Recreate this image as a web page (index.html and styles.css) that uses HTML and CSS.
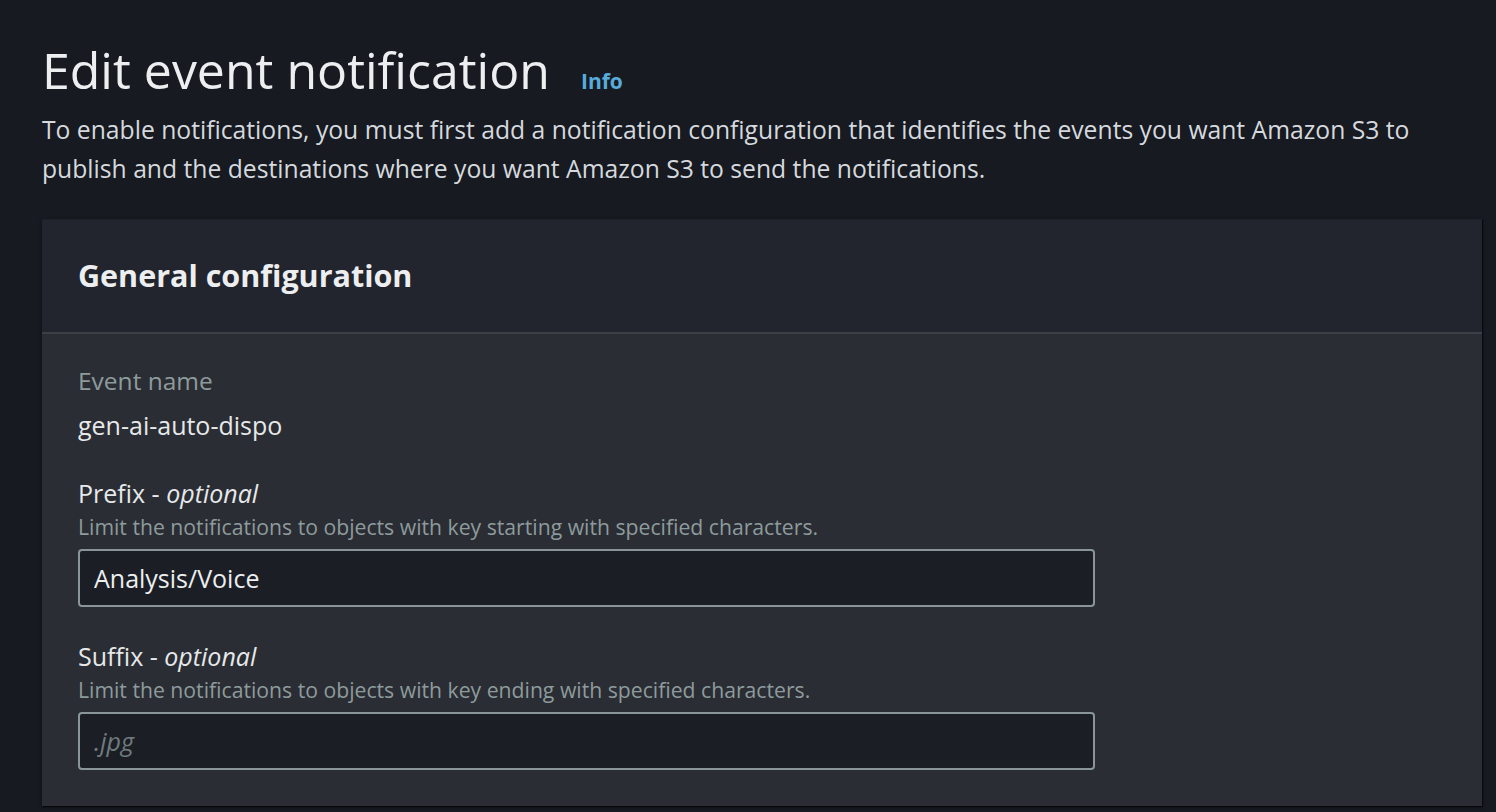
FILE: index.html
```html
<!DOCTYPE html>
<html lang="en">
<head>
<meta charset="utf-8">
<title>Edit event notification</title>
<link rel="stylesheet" href="styles.css">
</head>
<body>
<main class="page">
  <header class="page-header">
    <div class="title-row">
      <h1 class="title">Edit event notification</h1>
      <a class="info-link" href="#">Info</a>
    </div>
    <p class="description">To enable notifications, you must first add a notification configuration that identifies the events you want Amazon S3 to publish and the destinations where you want Amazon S3 to send the notifications.</p>
  </header>
  <section class="container">
    <div class="container-header">
      <h2 class="container-title">General configuration</h2>
    </div>
    <div class="container-body">
      <div class="field field-kv">
        <div class="kv-label">Event name</div>
        <div class="kv-value">gen-ai-auto-dispo</div>
      </div>
      <div class="field">
        <label class="field-label" for="prefix">Prefix - <i>optional</i></label>
        <div class="field-desc">Limit the notifications to objects with key starting with specified characters.</div>
        <input class="input" id="prefix" type="text" value="Analysis/Voice">
      </div>
      <div class="field">
        <label class="field-label" for="suffix">Suffix - <i>optional</i></label>
        <div class="field-desc">Limit the notifications to objects with key ending with specified characters.</div>
        <input class="input" id="suffix" type="text" placeholder=".jpg">
      </div>
    </div>
  </section>
</main>
</body>
</html>
```

FILE: styles.css
```css
* { box-sizing: border-box; }
html, body {
  margin: 0;
  padding: 0;
  background: #171a21;
  height: 100%;
  overflow: hidden;
}
body {
  font-family: "Open Sans", "Noto Sans", sans-serif;
  color: #e9ebed;
}
.page {
  padding: 38px 14px 0 42px;
}
.title-row {
  display: flex;
  align-items: baseline;
  gap: 31px;
}
.title {
  margin: 0;
  font-size: 50px;
  font-weight: 400;
  line-height: 64px;
  color: #eceef0;
}
.info-link {
  font-size: 21px;
  font-weight: 700;
  color: #57acdc;
  text-decoration: none;
}
.description {
  margin: 8px 0 0;
  font-size: 24.7px;
  line-height: 39px;
  color: #d5d9dd;
  max-width: 1400px;
}
.container {
  margin-top: 31px;
  background: #2a2d33;
  box-shadow: 0 1px 3px rgba(0,0,0,0.55), 1px 1px 1px rgba(0,0,0,0.5);
  border-top: 1px solid #1e2128;
}
.container-header {
  background: #22252d;
  border-bottom: 2px solid #3b3f46;
  height: 114px;
  display: flex;
  align-items: center;
  padding: 0 36px 2px;
}
.container-title {
  margin: 0;
  font-size: 30.5px;
  font-weight: 700;
  color: #eceef0;
}
.container-body {
  padding: 30px 36px 36px;
  display: flex;
  flex-direction: column;
  gap: 32px;
}
.field-kv {
  margin-bottom: 2px;
}
.kv-label {
  font-size: 24.5px;
  line-height: 34px;
  color: #8d9b9c;
}
.kv-value {
  font-size: 25px;
  line-height: 34px;
  margin-top: 10px;
  color: #e6e8ea;
}
.field-label {
  display: block;
  font-size: 25px;
  line-height: 34px;
  color: #e6e8ea;
  font-weight: 500;
}
.field-desc {
  font-size: 21.2px;
  line-height: 34px;
  color: #8d9b9c;
}
.input {
  display: block;
  margin-top: 5px;
  width: 1017px;
  height: 58px;
  background: #1b1e25;
  border: 2px solid #8a9597;
  border-radius: 4px;
  padding: 0 14px;
  font-family: inherit;
  font-size: 25px;
  color: #eceef0;
  outline: none;
}
.input::placeholder {
  color: #6f7b7d;
  font-style: italic;
}
```
